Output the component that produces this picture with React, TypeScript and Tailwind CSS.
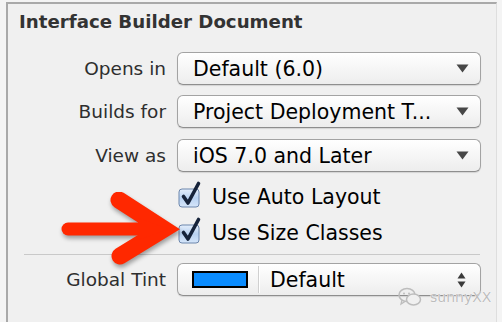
import React from 'react';

const FONT = { fontFamily: '"DejaVu Sans", "Liberation Sans", sans-serif' };

const DownArrow = () => (
  <svg width="13" height="9" viewBox="0 0 13 9" className="shrink-0">
    <path d="M0.5 0.5 L12.5 0.5 L6.5 8.5 Z" fill="#474747" />
  </svg>
);

const UpDownArrows = () => (
  <svg width="9" height="16" viewBox="0 0 9 16" className="shrink-0">
    <path d="M0.5 6.5 L8.5 6.5 L4.5 0.5 Z" fill="#3a3a3a" />
    <path d="M0.5 9.5 L8.5 9.5 L4.5 15.5 Z" fill="#3a3a3a" />
  </svg>
);

const Popup: React.FC<{ value: string }> = ({ value }) => (
  <div className="flex items-center w-[304px] h-[33px] pl-[15px] pr-[11px] rounded-[6px] border border-[#a3a3a3] border-b-[#8e8e8e] bg-gradient-to-b from-[#ffffff] to-[#ededed] shadow-[0_1px_1px_rgba(0,0,0,0.12)]">
    <span className="flex-1 text-[20.5px] leading-[26px] text-black whitespace-nowrap">{value}</span>
    <DownArrow />
  </div>
);

const Row: React.FC<{ label: string; className?: string; children: React.ReactNode }> = ({ label, className, children }) => (
  <div className={`flex items-center ${className ?? ''}`}>
    <span className="w-[159px] pr-[1px] text-right text-[18.5px] leading-[24px] text-[#2e2e2e]">{label}</span>
    <div className="ml-[10px]">{children}</div>
  </div>
);

const Checkbox = () => (
  <svg width="24" height="27" viewBox="0 0 24 27" className="shrink-0 -mt-[6px]">
    <defs>
      <linearGradient id="cbg" x1="0" y1="0" x2="0" y2="1">
        <stop offset="0" stopColor="#e4eefb" />
        <stop offset="0.5" stopColor="#b9d2f1" />
        <stop offset="1" stopColor="#d6e6fa" />
      </linearGradient>
    </defs>
    <rect x="1" y="8" width="20" height="18" rx="3" fill="url(#cbg)" stroke="#6d87ad" strokeWidth="1" />
    <path d="M5.5 15.5 L10 22 L20.5 2.5" fill="none" stroke="#16233a" strokeWidth="3.6" strokeLinecap="round" strokeLinejoin="round" />
  </svg>
);

const CheckRow: React.FC<{ label: string; className?: string }> = ({ label, className }) => (
  <div className={`flex items-center h-[26px] pl-[170px] ${className ?? ''}`}>
    <Checkbox />
    <span className="ml-[10px] text-[20.5px] leading-[26px] text-black">{label}</span>
  </div>
);

const RedArrow = () => (
  <svg
    width="130"
    height="75"
    viewBox="0 0 130 75"
    className="absolute left-[50px] top-[192px] drop-shadow-[1px_3px_2px_rgba(0,0,0,0.35)]"
  >
    <path d="M18 37 L108 37" stroke="#ff2800" strokeWidth="13" strokeLinecap="round" />
    <path d="M69 8 L114 37 L70 64" fill="none" stroke="#ff2800" strokeWidth="17" strokeLinecap="round" strokeLinejoin="miter" strokeMiterlimit="2" />
    <path d="M88 26 L119 37 L88 48 Z" fill="#ff2800" />
  </svg>
);

const Watermark = () => (
  <div className="absolute left-[398px] top-[287px] flex items-center gap-[8px]">
    <svg width="24" height="20" viewBox="0 0 24 20">
      <ellipse cx="9" cy="8" rx="8" ry="6.5" fill="none" stroke="#bdbdbd" strokeWidth="1.5" />
      <ellipse cx="15.5" cy="12.5" rx="7" ry="5.5" fill="#f0f0f0" stroke="#bdbdbd" strokeWidth="1.5" />
      <circle cx="6" cy="6.5" r="1" fill="#bdbdbd" />
      <circle cx="11" cy="6.5" r="1" fill="#bdbdbd" />
      <path d="M4 13 L3 17 L7 14.5" fill="none" stroke="#bdbdbd" strokeWidth="1.3" />
    </svg>
    <span className="text-[14px] leading-none text-[#bdbdbd] [text-shadow:0_0_1px_#fff,0_0_1px_#fff]" style={FONT}>
      sunnyXX
    </span>
  </div>
);

export default function App() {
  return (
    <div className="relative w-[502px] h-[322px] bg-[#f4f4f4] pt-[2px] pl-[6px] overflow-hidden" style={FONT}>
      <div className="w-[491px] h-[320px] bg-[#f0f0f0] border-t-2 border-l-2 border-[#a9a9a9] border-r border-r-[#dedede]">
        <div className="mt-[7px] pl-[11px] h-[22px] flex items-center text-[18.2px] font-bold text-[#333333]">
          Interface Builder Document
        </div>

        <Row label="Opens in" className="mt-[19px]">
          <Popup value="Default (6.0)" />
        </Row>
        <Row label="Builds for" className="mt-[10px]">
          <Popup value="Project Deployment T..." />
        </Row>
        <Row label="View as" className="mt-[11px]">
          <Popup value="iOS 7.0 and Later" />
        </Row>

        <CheckRow label="Use Auto Layout" className="mt-[12px]" />
        <CheckRow label="Use Size Classes" className="mt-[10px]" />

        <div className="mt-[8px] ml-[16px] w-[456px] h-px bg-[#c9c9c9]" />

        <Row label="Global Tint" className="mt-[8px]">
          <div className="flex items-center w-[304px] h-[33px] pl-[14px] pr-[14px] rounded-[6px] border border-[#a3a3a3] border-b-[#8e8e8e] bg-gradient-to-b from-[#ffffff] to-[#ededed] shadow-[0_1px_1px_rgba(0,0,0,0.12)]">
            <div className="w-[56px] h-[17px] border-2 border-black bg-[#0a8cff]" />
            <div className="ml-[10px] w-px h-[27px] bg-[#d0d0d0] shadow-[1px_0_0_#ffffff]" />
            <span className="ml-[11px] flex-1 text-[20.5px] leading-[26px] text-black">Default</span>
            <UpDownArrows />
          </div>
        </Row>
      </div>

      <RedArrow />
      <Watermark />
    </div>
  );
}
